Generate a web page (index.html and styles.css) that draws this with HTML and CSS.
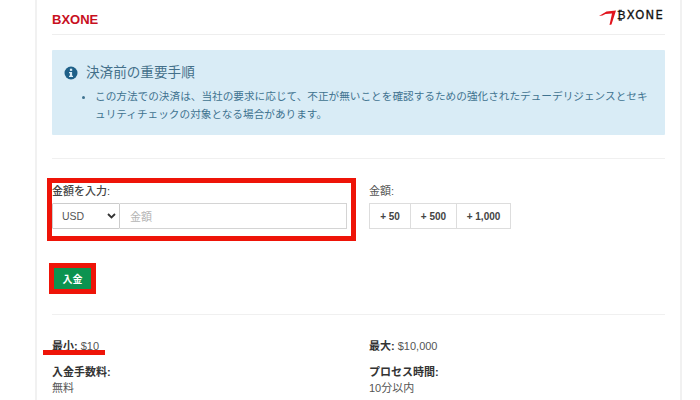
FILE: index.html
```html
<!DOCTYPE html>
<html lang="ja">
<head>
<meta charset="utf-8">
<title>BXONE</title>
<link rel="stylesheet" href="styles.css">
</head>
<body>
<main class="card">
  <header class="head">
    <h1 class="brand">BXONE</h1>
    <div class="logo">
      <svg class="logo-mark" width="17" height="16" viewBox="0 0 17 16"><path d="M0 6 L7.5 1.5 L17 0.5 L12.5 14.5 L10.5 15 L13 3.5 L6.5 4 L3.5 5.5 Z" fill="#e2141d"/></svg>
      <span class="logo-text">₿XONE</span>
    </div>
  </header>
  <section class="alert">
    <h2 class="alert-title">
      <svg class="info" width="14" height="14" viewBox="0 0 14 14"><circle cx="7" cy="7" r="6.5" fill="#1f6088"/><rect x="5.9" y="2.7" width="2.3" height="2.2" fill="#d9ecf6"/><path d="M5 6h3.1v3.7H9v1.2H5V9.7h.9V7.2H5z" fill="#d9ecf6"/></svg>
      決済前の重要手順
    </h2>
    <ul class="alert-list">
      <li>この方法での決済は、当社の要求に応じて、不正が無いことを確認するための強化されたデューデリジェンスとセキュリティチェックの対象となる場合があります。</li>
    </ul>
  </section>
  <hr class="rule rule-form">
  <section class="form-row">
    <div class="amount-col">
      <label class="label label-strong">金額を入力:</label>
      <div class="amount-group">
        <div class="select">USD<svg class="chev" width="9" height="6" viewBox="0 0 9 6"><path d="M1 1l3.5 3.5L8 1" fill="none" stroke="#333" stroke-width="1.8"/></svg></div>
        <div class="input">金額</div>
      </div>
      <span class="mark mark-form"></span>
    </div>
    <div class="quick-col">
      <label class="label">金額:</label>
      <div class="quick">
        <span class="quick-btn q50">+ 50</span>
        <span class="quick-btn q500">+ 500</span>
        <span class="quick-btn q1000">+ 1,000</span>
      </div>
    </div>
  </section>
  <div class="submit-row">
    <span class="submit">入金</span>
  </div>
  <hr class="rule rule-info">
  <section class="info-grid">
    <div class="info-item limit"><b>最小:</b> $10<span class="mark-line"></span></div>
    <div class="info-item limit"><b>最大:</b> $10,000</div>
    <div class="info-item"><b>入金手数料:</b><p>無料</p></div>
    <div class="info-item"><b>プロセス時間:</b><p>10分以内</p></div>
  </section>
</main>
</body>
</html>
```
FILE: styles.css
```css
* { box-sizing: border-box; }
html, body { margin: 0; padding: 0; background: #fff; }
body {
  height: 400px;
  overflow: hidden;
  font-family: "Liberation Sans", "Noto Sans CJK JP", sans-serif;
  font-size: 11px;
  color: #555;
}
.card {
  width: 647px;
  height: 400px;
  margin-left: 35px;
  padding: 0 15px;
  border-left: 2px solid #f1f1f1;
  border-right: 2px solid #f1f1f1;
}
.head {
  display: flex;
  justify-content: space-between;
  height: 35px;
  border-bottom: 1px solid #eeeeee;
}
.brand {
  margin: 12px 0 0;
  font-size: 13px;
  line-height: 15px;
  font-weight: 700;
  color: #c8101e;
}
.logo { display: flex; align-items: flex-start; margin: 9px 1px 0 0; }
.logo-mark { display: block; margin-top: 1px; }
.logo-text {
  margin-left: 1px;
  font-family: "DejaVu Sans", sans-serif;
  font-size: 11.5px;
  line-height: 13px;
  letter-spacing: 1.3px;
  font-weight: 400;
  color: #111;
  -webkit-text-stroke: 0.3px #111;
}
.alert {
  margin-top: 15px;
  height: 85px;
  padding: 14px 12px 0;
  background: #d9ecf6;
  border-radius: 1px;
  color: #3f7390;
}
.alert-title {
  display: flex;
  align-items: center;
  gap: 8px;
  margin: 0;
  font-size: 13.6px;
  line-height: 18px;
  font-weight: 400;
  color: #44708a;
}
.info { flex: none; }
.alert-list {
  margin: 5px 0 0;
  padding: 0 0 0 31px;
  font-size: 10.65px;
  line-height: 18px;
}
.rule { margin: 0; border: 0; border-top: 1px solid #f0f0f0; }
.rule-form { margin-top: 23px; }
.form-row { display: flex; margin-top: 25px; }
.amount-col { position: relative; width: 317px; }
.quick-col { flex: none; }
.label { display: block; font-size: 11px; line-height: 14px; color: #555; }
.label-strong { color: #444; font-weight: 500; }
.amount-group { display: flex; margin-top: 5px; width: 295px; height: 26px; }
.select {
  display: flex;
  align-items: center;
  justify-content: space-between;
  width: 68px;
  padding: 0 2px 0 9px;
  font-size: 10.5px;
  color: #555;
  background: #fff;
  border: 1px solid #ccc;
  border-radius: 1px;
}
.chev { margin-right: 1px; }
.input {
  flex: 1;
  display: flex;
  align-items: center;
  padding: 0 10px;
  font-size: 11px;
  color: #b5b5b5;
  border: 1px solid #d4d4d4;
  border-left: 0;
}
.mark-form {
  position: absolute;
  left: -5px;
  top: -6px;
  width: 309px;
  height: 63px;
  border: 5px solid #ee1408;
}
.quick { display: flex; margin-top: 5px; height: 26px; border: 1px solid #ddd; }
.quick-btn {
  display: flex;
  align-items: center;
  justify-content: center;
  font-size: 10px;
  font-weight: 700;
  color: #444;
  border-left: 1px solid #ddd;
}
.quick-btn:first-child { border-left: 0; }
.q50 { width: 40px; }
.q500 { width: 46px; }
.q1000 { width: 54px; }
.submit-row { margin-top: 39px; height: 22px; }
.submit {
  display: inline-flex;
  align-items: center;
  justify-content: center;
  width: 37px;
  height: 21px;
  margin-left: 2px;
  font-size: 10px;
  font-weight: 700;
  color: #fff;
  background: #0c9350;
  outline: 5px solid #ee1408;
}
.rule-info { margin-top: 24px; }
.info-grid {
  display: grid;
  grid-template-columns: 317px 1fr;
  row-gap: 12px;
  margin-top: 24px;
  line-height: 14px;
  color: #555;
}
.info-item { position: relative; }
.info-item b { color: #333; }
.info-item p { margin: 2px 0 0; }
.mark-line {
  position: absolute;
  left: -9px;
  top: 11px;
  width: 62px;
  height: 5px;
  background: #ee1408;
}
```
